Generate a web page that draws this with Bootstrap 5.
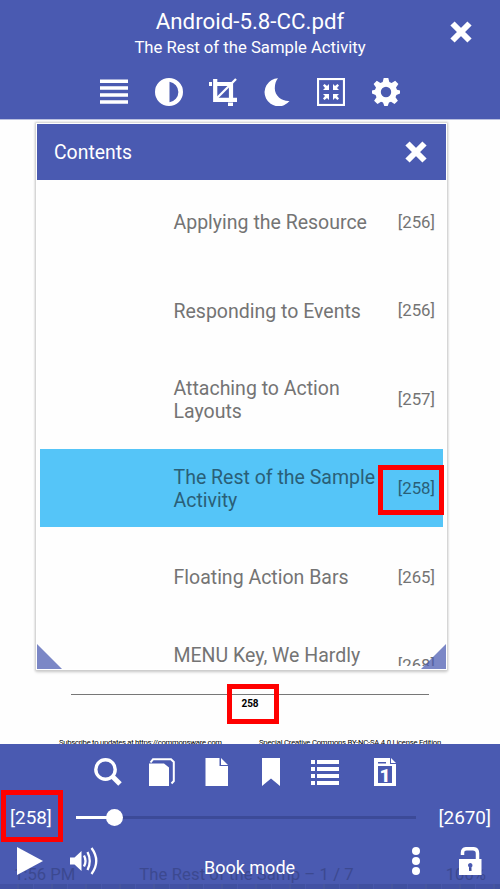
<!DOCTYPE html>
<html lang="en">
<head>
<meta charset="utf-8">
<meta name="viewport" content="width=device-width, initial-scale=1">
<title>Android-5.8-CC.pdf</title>
<link href="https://cdn.jsdelivr.net/npm/bootstrap@5.3.0/dist/css/bootstrap.min.css" rel="stylesheet">
<style>
:root{--indigo:#4a5ab1}
body{font-family:Roboto,"Liberation Sans",sans-serif;background:#fefefe;height:889px;overflow:hidden}
svg{display:block;fill:#fff;flex:none}
.bar{background:var(--indigo);color:#fff}
.top-bar{height:119px;box-shadow:0 1px 0 #b9bfdf}
.doc-title{font-size:22.3px;line-height:27px;padding-top:8px}
.doc-sub{font-size:16.7px;line-height:22px;padding-top:2px}
.top-close{right:28px;top:21px}
.tools{gap:26.3px;padding-top:19px}
.contents{width:411px;height:547px;margin:4px 0 0 36px;border:1px solid #fff;box-shadow:0 0 2px 1px #ccc,0 2px 3px #ccc;background:#fefefe}
.contents-head{height:56px;padding:2px 18px 0 17px;font-size:19.4px}
.entries{height:486px;overflow:hidden;padding:3px}
.entry{height:78px;margin-bottom:10.8px;padding:0 8px 0 133.5px;color:#747474;font-size:19.5px;line-height:23px}
.entry.current{background:#55c5f8;color:#2a5f77}
.entry-name{width:207px;padding-top:1px}
.pg{font-size:16.8px}
.last-name{align-self:flex-start;padding-top:17px}
.corner{bottom:0;width:25px;height:25px;background:#4a5ab1;opacity:.73}
.corner.l{left:0;clip-path:polygon(0 0,100% 100%,0 100%)}
.corner.r{right:0;clip-path:polygon(100% 0,100% 100%,0 100%)}
.sheet{height:74px;color:#000}
.rule{height:1px;background:#777;margin:24px 71px 0 71px}
.sheet-num{font-size:10px;line-height:12px;font-weight:700;padding-top:3px}
.sheet-foot{font-size:7.7px;letter-spacing:-.28px;line-height:10px;padding:28px 59px 0 59px;white-space:nowrap}
.foot-b{letter-spacing:-.22px}
.bottom-bar{height:145px}
.book-tools{gap:26.3px;padding:14px 0 0 94px}
.day-icon{margin-left:6px}
.progress-row{height:42px;padding:2px 9px 0 10px;margin-top:10px;font-size:18.9px}
.track{width:340px;height:3px;background:#3c4a98;left:1px;top:-1px}
.track-fill{width:38px;height:3px;background:#fff}
.knob{width:17px;height:17px;border-radius:50%;background:#fff;left:30px;top:-7px}
.ghost{left:0;right:0;bottom:2px;height:24px;color:#3c4990;font-size:16.7px;line-height:24px;white-space:nowrap;padding:0 14px}
.ghost-title{margin-right:28px;letter-spacing:.06px}
.ghost-strip{left:0;right:0;bottom:0;height:5px;background:repeating-linear-gradient(90deg,#4251a4 0 17px,#46559e 17px 19px,#4050a0 19px 33px,#4857aa 33px 34px)}
.foot-row{margin-top:9px;padding-left:17px}
.vol{margin-left:27px}
.mode{font-size:18px;line-height:22px;margin-left:106px;margin-top:10px;width:92px;white-space:nowrap}
.dots{margin-left:116px}
.lock{margin-left:39px}
.mark-box{border:5px solid #f00;pointer-events:none}
.m1{left:378px;top:465px;width:66px;height:50px}
.m2{left:227px;top:684px;width:52px;height:40px}
.m3{left:1px;top:790px;width:62px;height:52px}
</style>
<script src="https://cdn.jsdelivr.net/npm/bootstrap@5.3.0/dist/js/bootstrap.bundle.min.js" defer></script>
</head>
<body class="position-relative">
<header class="bar top-bar position-relative text-center">
  <div class="doc-title">Android-5.8-CC.pdf</div>
  <div class="doc-sub">The Rest of the Sample Activity</div>
  <svg class="top-close position-absolute" width="22" height="22" viewBox="0 0 22 22"><path d="M2.500 2.500L19.500 19.500M19.500 2.500L2.500 19.500" stroke="#fff" stroke-width="6"/></svg>
  <div class="tools d-flex justify-content-center">
    <svg width="28" height="28" viewBox="0 0 28 28"><path d="M0 1.500h28v3.500H0zM0 8.300h28v3.500H0zM0 15.300h28v3.500H0zM0 22.300h28v3.500H0z"/></svg>
    <svg width="28" height="28" viewBox="0 0 28 28"><path fill-rule="evenodd" d="M14 0a14 14 0 1 0 0 28a14 14 0 1 0 0-28zM14.500 3.800a10.300 10.300 0 0 1 0 20.400z"/></svg>
    <svg width="28" height="28" viewBox="0 0 28 28"><path d="M0 4h3v4H0zM19 24.500h5V28h-5z"/><path d="M6.200 1v20.800H28M6 6H22v16" fill="none" stroke="#fff" stroke-width="4.200"/><path d="M8 20L27 1" fill="none" stroke="#fff" stroke-width="2.300"/></svg>
    <svg width="28" height="28" viewBox="0 0 28 28"><path d="M15 .3A14 14 0 1 0 26.500 23C19 23.500 11.800 18 11.800 10.500C11.800 6 13 2.500 15 .3z"/></svg>
    <svg width="28" height="28" viewBox="0 0 28 28"><rect x="1" y="1" width="26" height="26" fill="none" stroke="#fff" stroke-width="2.200"/><path id="ar" d="M6 7.500L7.500 6L10 8L12 6V12H6L8 10z"/><use href="#ar" transform="translate(28 0) scale(-1 1)"/><use href="#ar" transform="translate(0 28) scale(1 -1)"/><use href="#ar" transform="translate(28 28) scale(-1 -1)"/></svg>
    <svg width="28" height="28" viewBox="0 0 28 28"><path fill-rule="evenodd" d="M11.700 0h4.600l1 4 2.300 1 3.600-2.200 3.200 3.200-2.400 3.600 1 2.200 3 .600v3.200l-3.600 1.400-.900 2.200 2.400 3.500-3.400 3.300-3.500-2.300-2 .900-1.400 3.600h-3.200l-1.400-3.700-2-.800-3.500 2.300-3.400-3.300 2.400-3.500-.900-2.200L0 15.600v-3.200l3-.600 1-2.200L1.600 6l3.200-3.200L8.400 5l2.300-1zM14 8.800a5.200 5.200 0 1 0 0 10.400a5.200 5.200 0 1 0 0-10.400z"/></svg>
  </div>
</header>

<main>
  <section class="contents position-relative">
    <div class="contents-head bar d-flex align-items-center justify-content-between">
      <span>Contents</span>
      <svg width="24" height="24" viewBox="0 0 24 24"><path d="M3.500 2.500L20.500 19.500M20.500 2.500L3.500 19.500" stroke="#fff" stroke-width="6"/></svg>
    </div>
    <div class="entries">
      <div class="entry d-flex align-items-center justify-content-between"><span class="entry-name">Applying the Resource</span><span class="pg">[256]</span></div>
      <div class="entry d-flex align-items-center justify-content-between"><span class="entry-name">Responding to Events</span><span class="pg">[256]</span></div>
      <div class="entry d-flex align-items-center justify-content-between"><span class="entry-name">Attaching to Action Layouts</span><span class="pg">[257]</span></div>
      <div class="entry current d-flex align-items-center justify-content-between"><span class="entry-name">The Rest of the Sample Activity</span><span class="pg">[258]</span></div>
      <div class="entry d-flex align-items-center justify-content-between"><span class="entry-name">Floating Action Bars</span><span class="pg">[265]</span></div>
      <div class="entry d-flex align-items-center justify-content-between"><span class="entry-name last-name">MENU Key, We Hardly</span><span class="pg">[268]</span></div>
    </div>
    <div class="corner l position-absolute"></div>
    <div class="corner r position-absolute"></div>
  </section>
  <section class="sheet overflow-hidden">
    <div class="rule"></div>
    <div class="sheet-num text-center">258</div>
    <div class="sheet-foot d-flex justify-content-between"><span class="foot-a">Subscribe to updates at https://commonsware.com</span><span class="foot-b">Special Creative Commons BY-NC-SA 4.0 License Edition</span></div>
  </section>
</main>

<footer class="bar bottom-bar position-relative overflow-hidden">
  <div class="ghost position-absolute d-flex justify-content-between"><span>1:56 PM</span><span class="ghost-title">The Rest of the Samp – 1 / 7</span><span>100%</span></div>
  <div class="ghost-strip position-absolute"></div>
  <div class="book-tools d-flex position-relative">
    <svg width="28" height="28" viewBox="0 0 28 28"><circle cx="11.500" cy="11.500" r="9.700" fill="none" stroke="#fff" stroke-width="3.400"/><path d="M18 18L26 26" stroke="#fff" stroke-width="5"/></svg>
    <svg width="28" height="28" viewBox="0 0 28 28"><path d="M1 5.500h15l5 4V28H1z"/><path d="M2.500 4.500L5 1.300H23L25.800 4V23L23.500 25.500" fill="none" stroke="#fff" stroke-width="2"/></svg>
    <svg width="28" height="28" viewBox="0 0 28 28"><path d="M2.500 0h14v8H25v20H2.500zM18 0L25 7h-7z"/></svg>
    <svg width="28" height="28" viewBox="0 0 28 28"><path d="M5 0h18v28l-9-7.500L5 28z"/></svg>
    <svg width="28" height="28" viewBox="0 0 28 28"><path d="M0 2h4v4H0zM6 2h22v4H6zM0 9h4v4H0zM6 9h22v4H6zM0 16h4v4H0zM6 16h22v4H6zM0 23h4v4H0zM6 23h22v4H6z"/></svg>
    <svg class="day-icon" width="28" height="28" viewBox="0 0 28 28"><path fill-rule="evenodd" d="M3 0h16v6h6v22H3zM20 0l5 5h-5zM7 4v1.500h8V4zM7 8v17h14V8z"/><text x="14" y="23.500" text-anchor="middle" font-size="19" font-weight="900" font-family="Roboto,sans-serif">1</text></svg>
  </div>
  <div class="progress-row d-flex align-items-center justify-content-between position-relative">
    <span>[258]</span>
    <div class="track position-relative"><div class="track-fill"></div><div class="knob position-absolute"></div></div>
    <span>[2670]</span>
  </div>
  <div class="foot-row d-flex align-items-start position-relative">
    <svg class="play" width="26" height="28" viewBox="0 0 26 28"><path d="M0 0L26 14L0 28z"/></svg>
    <svg class="vol" width="28" height="28" viewBox="0 0 28 28"><path d="M0 10.500h4.500L11.500 4v20L4.500 17.500H0z"/><path d="M14 8.500Q17 14 14 19.500M17.500 5Q22 14 17.500 23M21.500 1Q31 14 21.500 27" fill="none" stroke="#fff" stroke-width="2.300"/></svg>
    <span class="mode">Book mode</span>
    <svg class="dots" width="8" height="28" viewBox="0 0 8 28"><circle cx="4" cy="4" r="4"/><circle cx="4" cy="14" r="4"/><circle cx="4" cy="24" r="4"/></svg>
    <svg class="lock" width="24" height="28" viewBox="0 0 24 28"><path fill-rule="evenodd" d="M0 12h22.500v16H0zM11.300 16a2.300 2.300 0 0 0-1.300 4.200V24h2.500v-3.800A2.300 2.300 0 0 0 11.300 16z"/><path d="M3.500 8V6q0-4.300 4.300-4.300h6q4.700 0 4.700 4.500V13" fill="none" stroke="#fff" stroke-width="3.500"/></svg>
  </div>
</footer>
<div class="mark-box m1 position-absolute"></div>
<div class="mark-box m2 position-absolute"></div>
<div class="mark-box m3 position-absolute"></div>
</body>
</html>
